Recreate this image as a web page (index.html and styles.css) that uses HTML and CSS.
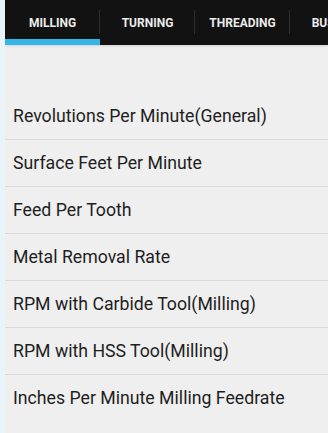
FILE: index.html
```html
<!DOCTYPE html>
<html>
<head>
<meta charset="utf-8">
<link rel="stylesheet" href="styles.css">
</head>
<body>
<div class="screen">
  <div class="edge"></div>
  <div class="main">
    <nav class="tabs">
      <div class="tab active"><span>MILLING</span></div>
      <div class="tab"><span>TURNING</span></div>
      <div class="tab"><span>THREADING</span></div>
      <div class="tab"><span>BUSHING</span></div>
    </nav>
    <div class="spacer"></div>
    <ul class="list">
      <li>Revolutions Per Minute(General)</li>
      <li>Surface Feet Per Minute</li>
      <li>Feed Per Tooth</li>
      <li>Metal Removal Rate</li>
      <li>RPM with Carbide Tool(Milling)</li>
      <li>RPM with HSS Tool(Milling)</li>
      <li class="last">Inches Per Minute Milling Feedrate</li>
    </ul>
  </div>
</div>
</body>
</html>
```

FILE: styles.css
```css
html, body {
  margin: 0;
  padding: 0;
  width: 328px;
  height: 433px;
  overflow: hidden;
  background: #efefef;
  font-family: Roboto, "Liberation Sans", sans-serif;
}
.screen {
  display: flex;
  width: 328px;
  height: 433px;
}
.edge {
  width: 5px;
  flex: none;
  background: #eaf2fa;
}
.main {
  flex: 1;
  min-width: 0;
  background: #efefef;
  overflow: hidden;
}
.tabs {
  display: flex;
  height: 45px;
  background: #121212;
  box-shadow: 0 1px 2px rgba(0,0,0,0.12);
  white-space: nowrap;
}
.tab {
  flex: none;
  width: 95px;
  height: 45px;
  box-sizing: border-box;
  display: flex;
  align-items: center;
  justify-content: center;
  position: relative;
  color: #ececec;
  font-weight: bold;
  font-size: 12px;
  padding-bottom: 0;
}
.tab::after {
  content: "";
  position: absolute;
  right: 0;
  top: 10px;
  height: 24px;
  width: 1px;
  background: #2e2e2e;
}
.tab.active {
  border-bottom: 6px solid #33b5e5;
  padding-top: 6px;
}
.spacer {
  height: 48px;
}
.list {
  list-style: none;
  margin: 0;
  padding: 0;
}
.list li {
  height: 47px;
  box-sizing: border-box;
  border-bottom: 1px solid #dadada;
  display: flex;
  align-items: center;
  padding-left: 8px;
  font-size: 17.7px;
  color: #1e1e1e;
}
.list li.last {
  border-bottom-color: transparent;
}
```
